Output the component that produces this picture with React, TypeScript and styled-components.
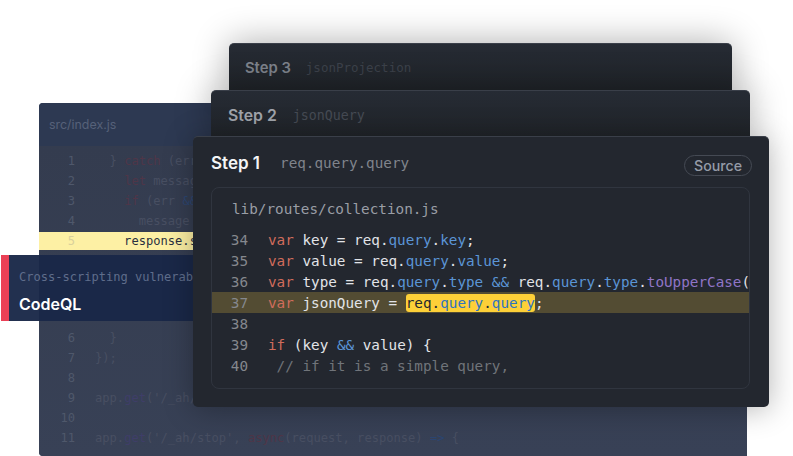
import React from "react";
import styled, { createGlobalStyle } from "styled-components";

const mono = `"DejaVu Sans Mono", "Liberation Mono", monospace`;
const sans = `Inter, "Liberation Sans", sans-serif`;

const GlobalStyle = createGlobalStyle`
  html, body {
    margin: 0;
    background: #fff;
  }
`;

const Stage = styled.div`
  position: relative;
  width: 793px;
  height: 456px;
  overflow: hidden;
  background: #fff;
`;

/* back editor window */
const Editor = styled.div`
  position: absolute;
  left: 39px;
  top: 103px;
  width: 708px;
  height: 353px;
  display: flex;
  flex-direction: column;
  border-radius: 4px 4px 0 4px;
  overflow: hidden;
  background: linear-gradient(180deg, #2c3751 0%, #333c52 40%, #3a4358 100%);
  font-family: ${mono};
`;

const EditorTitle = styled.div`
  flex: 0 0 43px;
  display: flex;
  align-items: center;
  padding-left: 10px;
  font-family: ${sans};
  font-size: 12.4px;
  color: #566179;
  background: #2d3952;
`;

const EditorBody = styled.div`
  flex: 1;
  display: flex;
  flex-direction: column;
  padding-top: 5px;
  background: linear-gradient(180deg, #343c4f 0%, #384156 100%);
`;

const EditorRow = styled.div<{ $hit?: boolean }>`
  height: 20px;
  display: flex;
  align-items: center;
  font-size: 12.1px;
  color: ${(p) => (p.$hit ? "#2a3040" : "#484f62")};
  background: ${(p) =>
    p.$hit ? "linear-gradient(180deg, transparent 0 1px, #fdf0a4 1px 19px, transparent 19px)" : "none"};
`;

const EditorNum = styled.span<{ $hit?: boolean }>`
  flex: 0 0 36px;
  text-align: right;
  margin-right: 20px;
  color: ${(p) => (p.$hit ? "#d9d09c" : "#4f586b")};
`;

const LineText = styled.span`
  white-space: pre;
`;

const EditorGap = styled.div`
  height: 77px;
`;

const Dim = styled.span<{ $kind: "key" | "fn" | "prop" }>`
  color: ${(p) => (p.$kind === "key" ? "#4f3648" : p.$kind === "fn" ? "#3f3e68" : "#2c4672")};
`;

/* alert banner over the editor */
const Alert = styled.div`
  position: absolute;
  left: 1px;
  top: 255px;
  width: 192px;
  height: 66px;
  box-sizing: border-box;
  display: flex;
  flex-direction: column;
  justify-content: center;
  gap: 10px;
  padding: 5px 0 0 10px;
  border-left: 8px solid #ea4056;
  background: rgba(25, 40, 72, 0.96);
  overflow: hidden;
  white-space: nowrap;
`;

const AlertText = styled.div`
  font-family: ${mono};
  font-size: 12.05px;
  line-height: 16px;
  color: #5f6d8b;
`;

const AlertName = styled.div`
  font-family: ${sans};
  font-weight: 600;
  font-size: 16px;
  line-height: 18px;
  color: #fff;
`;

/* stack of step cards */
const Stack = styled.div`
  position: absolute;
  left: 193px;
  top: 43px;
  width: 576px;
  display: flex;
  flex-direction: column;
  align-items: flex-start;
`;

const Card = styled.section<{ $width: number; $height: number; $inset: number; $front?: boolean }>`
  box-sizing: border-box;
  width: ${(p) => p.$width}px;
  height: ${(p) => p.$height}px;
  margin-left: ${(p) => p.$inset}px;
  border-radius: 5px 5px 0 0;
  border-top: 1px solid #3a3f49;
  background: linear-gradient(180deg, #262b34 0%, #202429 100%);
  box-shadow: 0 0 36px rgba(0, 0, 0, 0.33);
  ${(p) =>
    p.$front &&
    `
    border-radius: 5px;
    background: #23272f;
    box-shadow: 0 2px 30px rgba(0, 0, 0, 0.3);
  `}
`;

const CardHead = styled.header<{ $pad: number; $height: number; $gap: number; $top?: number }>`
  box-sizing: border-box;
  height: ${(p) => p.$height}px;
  display: flex;
  align-items: center;
  gap: ${(p) => p.$gap}px;
  padding: ${(p) => p.$top || 0}px 17px 0 ${(p) => p.$pad}px;
`;

const StepName = styled.h3<{ $size: number; $color: string }>`
  margin: 0;
  font-family: ${sans};
  font-weight: 600;
  font-size: ${(p) => p.$size}px;
  color: ${(p) => p.$color};
`;

const StepRef = styled.span<{ $size: number; $color: string }>`
  font-family: ${mono};
  font-size: ${(p) => p.$size}px;
  color: ${(p) => p.$color};
`;

const SourceTag = styled.span`
  margin-left: auto;
  margin-right: 0;
  margin-top: 4px;
  height: 21px;
  box-sizing: border-box;
  display: flex;
  align-items: center;
  padding: 0 9px;
  border: 1px solid #454a54;
  border-radius: 11px;
  font-family: ${sans};
  font-weight: 500;
  font-size: 14.2px;
  color: #959ba7;
`;

const CodeFrame = styled.div`
  box-sizing: border-box;
  margin: 0 19px 0 18px;
  height: 202px;
  border: 1px solid #30353f;
  border-radius: 8px;
  overflow: hidden;
  font-family: ${mono};
  font-size: 14.3px;
`;

const FileName = styled.div`
  height: 41px;
  display: flex;
  align-items: center;
  padding-left: 20px;
  color: #9a9ea6;
`;

const CodeRow = styled.div<{ $hit?: boolean }>`
  height: 21.1px;
  display: flex;
  align-items: center;
  color: #e2e4e8;
  background: ${(p) => (p.$hit ? "#534c33" : "none")};
`;

const CodeNum = styled.span`
  flex: 0 0 36px;
  text-align: right;
  margin-right: 20px;
  color: #85888e;
`;

const Tok = styled.span<{ $kind: "key" | "prop" | "fn" | "note" }>`
  color: ${(p) =>
    p.$kind === "key"
      ? "#d06c5c"
      : p.$kind === "prop"
      ? "#5b95d6"
      : p.$kind === "fn"
      ? "#9075c6"
      : "#70747a"};
`;

const Mark = styled.span`
  padding: 1px 0;
  border-radius: 3px;
  background: #fdd038;
  color: #23272f;
`;

const MarkProp = styled.span`
  color: #2f74c0;
`;

const App: React.FC = () => {
  return (
    <Stage>
      <GlobalStyle />
      <Editor>
        <EditorTitle>src/index.js</EditorTitle>
        <EditorBody>
          <EditorRow>
            <EditorNum>1</EditorNum>
            <LineText>
              {"  } "}
              <Dim $kind="key">catch</Dim>
              {" (err) {"}
            </LineText>
          </EditorRow>
          <EditorRow>
            <EditorNum>2</EditorNum>
            <LineText>
              {"    "}
              <Dim $kind="key">let</Dim>
              {" message"}
            </LineText>
          </EditorRow>
          <EditorRow>
            <EditorNum>3</EditorNum>
            <LineText>
              {"    "}
              <Dim $kind="key">if</Dim>
              {" (err "}
              <Dim $kind="prop">&&</Dim>
            </LineText>
          </EditorRow>
          <EditorRow>
            <EditorNum>4</EditorNum>
            <LineText>{"      message"}</LineText>
          </EditorRow>
          <EditorRow $hit>
            <EditorNum $hit>5</EditorNum>
            <LineText>{"    response.status"}</LineText>
          </EditorRow>
          <EditorGap />
          <EditorRow>
            <EditorNum>6</EditorNum>
            <LineText>{"  }"}</LineText>
          </EditorRow>
          <EditorRow>
            <EditorNum>7</EditorNum>
            <LineText>{"});"}</LineText>
          </EditorRow>
          <EditorRow>
            <EditorNum>8</EditorNum>
          </EditorRow>
          <EditorRow>
            <EditorNum>9</EditorNum>
            <LineText>
              {"app."}
              <Dim $kind="fn">get</Dim>
              {"('/_ah/start'"}
            </LineText>
          </EditorRow>
          <EditorRow>
            <EditorNum>10</EditorNum>
          </EditorRow>
          <EditorRow>
            <EditorNum>11</EditorNum>
            <LineText>
              {"app."}
              <Dim $kind="fn">get</Dim>
              {"('/_ah/stop', "}
              <Dim $kind="key">async</Dim>
              {"(request, response) "}
              <Dim $kind="prop">{"=>"}</Dim>
              {" {"}
            </LineText>
          </EditorRow>
        </EditorBody>
      </Editor>

      <Alert>
        <AlertText>Cross-scripting vulnerability</AlertText>
        <AlertName>CodeQL</AlertName>
      </Alert>

      <Stack>
        <Card $width={503} $height={47} $inset={36}>
          <CardHead $pad={16} $height={47} $gap={15}>
            <StepName $size={14.8} $color="#7e838c">Step 3</StepName>
            <StepRef $size={12.5} $color="#3d424b">jsonProjection</StepRef>
          </CardHead>
        </Card>
        <Card $width={539} $height={46} $inset={18}>
          <CardHead $pad={17} $height={46} $gap={16} $top={2}>
            <StepName $size={15.8} $color="#a0a4ab">Step 2</StepName>
            <StepRef $size={13.3} $color="#464b54">jsonQuery</StepRef>
          </CardHead>
        </Card>
        <Card $width={576} $height={271} $inset={0} $front>
          <CardHead $pad={18} $height={50} $gap={20} $top={2}>
            <StepName $size={17} $color="#f4f5f6">Step 1</StepName>
            <StepRef $size={14.3} $color="#80848c">req.query.query</StepRef>
            <SourceTag>Source</SourceTag>
          </CardHead>
          <CodeFrame>
            <FileName>lib/routes/collection.js</FileName>
            <CodeRow>
              <CodeNum>34</CodeNum>
              <LineText>
                <Tok $kind="key">var</Tok>
                {" key = req."}
                <Tok $kind="prop">query</Tok>
                {"."}
                <Tok $kind="prop">key</Tok>
                {";"}
              </LineText>
            </CodeRow>
            <CodeRow>
              <CodeNum>35</CodeNum>
              <LineText>
                <Tok $kind="key">var</Tok>
                {" value = req."}
                <Tok $kind="prop">query</Tok>
                {"."}
                <Tok $kind="prop">value</Tok>
                {";"}
              </LineText>
            </CodeRow>
            <CodeRow>
              <CodeNum>36</CodeNum>
              <LineText>
                <Tok $kind="key">var</Tok>
                {" type = req."}
                <Tok $kind="prop">query</Tok>
                {"."}
                <Tok $kind="prop">type</Tok>
                {" "}
                <Tok $kind="prop">&&</Tok>
                {" req."}
                <Tok $kind="prop">query</Tok>
                {"."}
                <Tok $kind="prop">type</Tok>
                {"."}
                <Tok $kind="fn">toUpperCase</Tok>
                {"();"}
              </LineText>
            </CodeRow>
            <CodeRow $hit>
              <CodeNum>37</CodeNum>
              <LineText>
                <Tok $kind="key">var</Tok>
                {" jsonQuery = "}
                <Mark>
                  req.<MarkProp>query</MarkProp>.<MarkProp>query</MarkProp>
                </Mark>
                {";"}
              </LineText>
            </CodeRow>
            <CodeRow>
              <CodeNum>38</CodeNum>
            </CodeRow>
            <CodeRow>
              <CodeNum>39</CodeNum>
              <LineText>
                <Tok $kind="key">if</Tok>
                {" (key "}
                <Tok $kind="prop">&&</Tok>
                {" value) {"}
              </LineText>
            </CodeRow>
            <CodeRow>
              <CodeNum>40</CodeNum>
              <LineText>
                <Tok $kind="note">{" // if it is a simple query,"}</Tok>
              </LineText>
            </CodeRow>
          </CodeFrame>
        </Card>
      </Stack>
    </Stage>
  );
};

export default App;
